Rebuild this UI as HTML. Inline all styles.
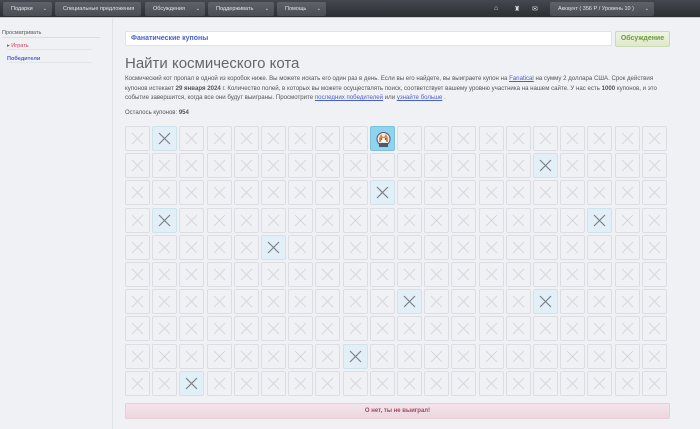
<!DOCTYPE html>
<html><head><meta charset="utf-8"><style>
*{margin:0;padding:0;box-sizing:border-box}
body{width:700px;height:429px;background:#f0f1f5;font-family:"Liberation Sans",sans-serif;font-size:7px;color:#555;position:relative;overflow:hidden}
.nav{position:absolute;left:0;top:0;width:700px;height:18px;background:linear-gradient(#45484f,#2c2e33);border-bottom:1px solid #c8cad0}
.b{position:absolute;top:2px;height:14px;background:linear-gradient(#5e626a,#4a4d54);border-radius:2px;color:#e4e4e4;font-size:5.5px;line-height:14px;padding-left:8px}
.b i{position:absolute;right:5px;top:0;font-style:normal;font-size:5px}
.ic{position:absolute;top:5px;color:#ddd;font-size:7px}
.side{position:absolute;left:0;top:18px;width:113px;height:411px;border-right:1px solid #e2e3e7}
.side div{position:absolute;font-size:5.5px}
.tab{position:absolute;left:125px;top:31px;width:487px;height:15px;background:#fff;border:1px solid #e0e2e6;border-radius:2px;color:#4a5fc9;font-weight:bold;font-size:7px;line-height:13px;padding-left:5px}
.disc{position:absolute;left:615px;top:31px;width:55px;height:16px;background:linear-gradient(#eef4e2,#dfe9cc);border:1px solid #ccd9b5;border-radius:2px;color:#6f9a3a;font-weight:bold;font-size:7px;line-height:14px;text-align:center}
h1{position:absolute;left:125px;top:55px;font-weight:normal;font-size:15px;color:#666}
.p{position:absolute;left:125px;top:74px;width:548px;font-size:6.1px;line-height:9.6px;color:#555}
.p a{color:#4a5fc9}
.left{position:absolute;left:125px;top:110px;font-size:6px}
.c{position:absolute;width:25px;height:25px;border:1px solid #dcdde2;border-radius:2px;background:#f0f1f5}
.c svg{position:absolute;left:5px;top:5px}
.h{background:#e2eff6;border-color:#cfe2ec}
.bar{position:absolute;left:125px;top:403px;width:545px;height:16px;background:linear-gradient(#f4e4ea,#ecd7de);border:1px solid #e6cdd6;border-radius:2px;color:#9b4a63;font-weight:bold;font-size:6px;line-height:14px;text-align:center}
</style></head><body>
<div class="nav">
<div class="b" style="left:3px;width:49px">Подарки<i>⌄</i></div>
<div class="b" style="left:55px;width:86px">Специальные предложения</div>
<div class="b" style="left:145px;width:60px">Обсуждения<i>⌄</i></div>
<div class="b" style="left:208px;width:66px">Поддерживать<i>⌄</i></div>
<div class="b" style="left:277px;width:49px">Помощь<i>⌄</i></div>
<div class="ic" style="left:494px">⌂</div><div class="ic" style="left:514px">♜</div><div class="ic" style="left:532px">✉</div>
<div class="b" style="left:550px;width:104px">Аккаунт ( 356 Р / Уровень 10 )<i>⌄</i></div>
</div>
<div class="side">
<div style="left:2px;top:12px;width:98px;border-bottom:1px solid #dcdde2;padding-bottom:1px">Просматривать</div>
<div style="left:7px;top:25px;width:85px;color:#d0405e;border-bottom:1px solid #e4e5e9">▸ Играть</div>
<div style="left:7px;top:38px;width:85px;color:#4a5fc9;font-weight:bold;border-bottom:1px solid #e4e5e9">Победители</div>
</div>
<div class="tab">Фанатические купоны</div>
<div class="disc">Обсуждение</div>
<h1>Найти космического кота</h1>
<div class="p">Космический кот пропал в одной из коробок ниже. Вы можете искать его один раз в день. Если вы его найдете, вы выиграете купон на <a href="#">Fanatical</a> на сумму 2 доллара США. Срок действия купонов истекает <b>29 января 2024</b> г. Количество полей, в которых вы можете осуществлять поиск, соответствует вашему уровню участника на нашем сайте. У нас есть <b>1000</b> купонов, и это событие завершится, когда все они будут выиграны. Просмотрите <a href="#">последних победителей</a> или <a href="#">узнайте больше</a> .</div>
<div class="left">Осталось купонов: <b>954</b></div>
<div id="g"></div>
<div class="bar">О нет, ты не выиграл!</div>
<script>
var hl={"0,1":1,"1,15":1,"2,9":1,"3,1":1,"3,17":1,"4,5":1,"6,10":1,"6,15":1,"8,8":1,"9,2":1},s="";
for(var r=0;r<10;r++)for(var c=0;c<20;c++){
var x=125+c*27.2,y=126+r*27.2,h=hl[r+","+c];
if(r==0&&c==9){s+='<div class="c" style="left:'+x+'px;top:'+y+'px;background:#8fd3ee;border-color:#7cc3df"><svg width="15" height="15" viewBox="0 0 15 15"><circle cx="7.5" cy="7" r="6.5" fill="#e8eef2" stroke="#556" stroke-width="1"/><path d="M3 6 L5 2 L7 5 L8 5 L10 2 L12 6 L12 10 L3 10Z" fill="#e8893a"/><rect x="5" y="6" width="5" height="4" fill="#fff"/><circle cx="5.5" cy="7" r="0.8" fill="#222"/><circle cx="9.5" cy="7" r="0.8" fill="#222"/><rect x="3" y="11" width="9" height="4" fill="#556"/></svg></div>';continue;}
s+='<div class="c'+(h?' h':'')+'" style="left:'+x+'px;top:'+y+'px"><svg width="13" height="13"><path d="M1 1L12 12M12 1L1 12" stroke="'+(h?'#7d8087':'#d6d7db')+'" stroke-width="'+(h?1.2:1)+'"/></svg></div>';}
document.getElementById("g").innerHTML=s;
</script>
</body></html>
